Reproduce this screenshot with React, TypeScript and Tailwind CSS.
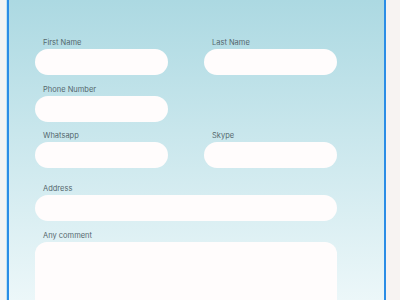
import React from "react";

const Label = ({ children }: { children: React.ReactNode }) => (
  <div className="h-[13px] pl-[8px] text-[7.5px] leading-[13px] text-[#54676d]">{children}</div>
);

const Field = ({ label, className = "" }: { label: string; className?: string }) => (
  <div className={"flex flex-col " + className}>
    <Label>{label}</Label>
    <div className="h-[26px] rounded-full bg-[#fffcfc]" />
  </div>
);

export default function App() {
  return (
    <div
      className="flex h-[300px] w-[400px] overflow-hidden bg-[#f6f3f2]"
      style={{ fontFamily: "Inter, 'Noto Sans', sans-serif" }}
    >
      <div className="w-[6px] bg-[#f3f4f4]" />
      <div className="w-px bg-[#bfe3f5]" />
      <div className="w-[379px] border-x-2 border-[#2b8de6] bg-gradient-to-b from-[#acd9e2] to-[#ecf7f9] pl-[26px] pt-[36px]">
        <div className="grid grid-cols-[133px_133px] gap-x-[36px]">
          <Field label="First Name" />
          <Field label="Last Name" />
          <Field label="Phone Number" className="mt-[8px]" />
          <div />
          <Field label="Whatsapp" className="mt-[7px]" />
          <Field label="Skype" className="mt-[7px]" />
          <Field label="Address" className="col-span-2 mt-[14px]" />
          <div className="col-span-2 mt-[8px] flex flex-col">
            <Label>Any comment</Label>
            <div className="h-[80px] rounded-[12px] bg-[#fffcfc]" />
          </div>
        </div>
      </div>
      <div className="flex-1 bg-[#f7f3f2]" />
    </div>
  );
}
